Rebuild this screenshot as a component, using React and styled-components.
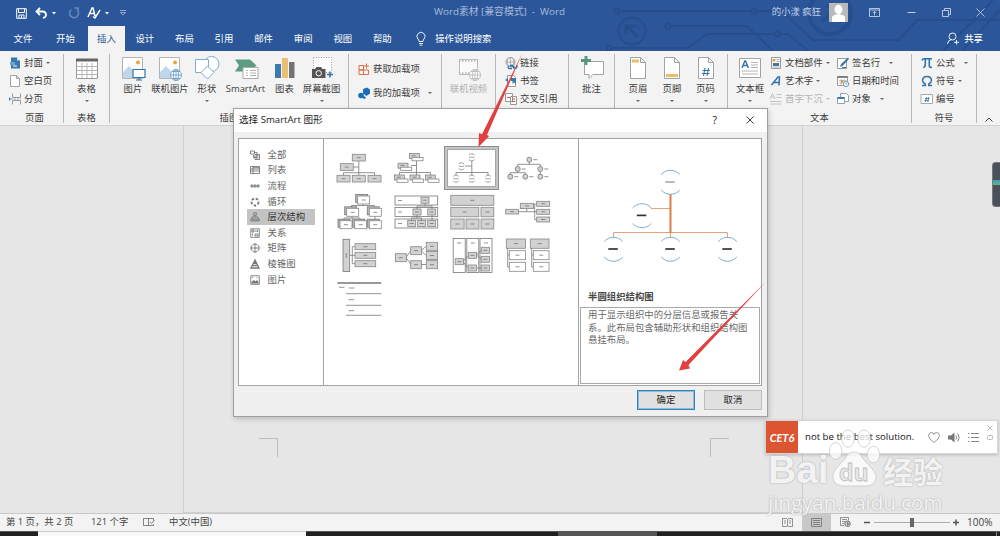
import React from "react";
import styled, { createGlobalStyle } from "styled-components";

const GlobalStyle = createGlobalStyle`
    * { box-sizing: border-box; }
    body {
        margin: 0;
        overflow: hidden;
        font-family: "Open Sans", "Noto Sans CJK SC", sans-serif;
        font-size: 9.4px;
        line-height: 14px;
        color: #3b3b3b;
    }
    p { margin: 0; }
    svg { display: block; flex: none; overflow: visible; }
`;

const Window = styled.div`
    position: relative;
    width: 1000px;
    height: 536px;
    display: grid;
    grid-template-rows: 51px 75px 387px 18px 5px;
    overflow: hidden;
    background: #e6e6e6;
`;

/* ---------- header ---------- */
const Header = styled.header`
    position: relative;
    background: #2b579a;
    color: #fff;
`;
const Circuit = styled.svg`
    position: absolute;
    left: 600px;
    top: 0;
`;
const TitleBar = styled.div`
    position: relative;
    height: 26px;
    display: grid;
    grid-template-columns: 400px 199px 401px;
    align-items: center;
`;
const QuickAccess = styled.div`
    display: flex;
    align-items: center;
    padding-left: 15px;
`;
const Slot = styled.span`
    width: ${(p) => p.$w}px;
    display: flex;
    justify-content: center;
    flex: none;
`;
const WindowTitle = styled.div`
    text-align: center;
    font-size: 9.8px;
    color: #a9bbda;
    white-space: pre;
    padding-bottom: 3px;
`;
const WindowTools = styled.div`
    display: flex;
    align-items: center;
    justify-content: flex-end;
    color: #c3d0e6;
    padding-bottom: 2px;
`;
const Avatar = styled.span`
    width: 19px;
    height: 19px;
    margin: 0 11px 0 8px;
    background: #b9b9b9;
`;
const Tabs = styled.nav`
    position: relative;
    height: 25px;
    display: flex;
    padding-left: 3px;
`;
const Tab = styled.span`
    width: ${(p) => p.$w || 40}px;
    text-align: center;
    line-height: 25px;
    color: ${(p) => (p.$active ? "#2b579a" : "#fff")};
    background: ${(p) => (p.$active ? "#f3f3f3" : "transparent")};
`;
const TellMe = styled.span`
    display: flex;
    align-items: center;
    gap: 9px;
    margin-left: 14px;
`;
const Share = styled.span`
    display: flex;
    align-items: center;
    gap: 5px;
    margin-left: auto;
    padding-right: 17px;
    font-weight: 500;
`;

/* ---------- ribbon ---------- */
const Ribbon = styled.section`
    display: grid;
    grid-template-columns: 64px 46px 239px 93px 54px 73px 46px 113px 184px 65px 23px;
    background: #f3f3f3;
    border-bottom: 1px solid #d2d2d2;
`;
const Group = styled.div`
    display: grid;
    grid-template-rows: 58px 14px;
    padding-top: 1px;
    border-right: 1px solid transparent;
    border-image: linear-gradient(transparent 4px, #b9b9b9 4px, #b9b9b9 71px, transparent 71px) 1;
`;
const GroupBody = styled.div`
    display: flex;
    padding-left: ${(p) => p.$pad || 0}px;
`;
const GroupLabel = styled.div`
    text-align: center;
    line-height: 15px;
`;
const Big = styled.div`
    width: ${(p) => p.$w}px;
    flex: none;
    display: flex;
    flex-direction: column;
    align-items: center;
    padding-top: 4px;
    white-space: nowrap;
    color: ${(p) => (p.$off ? "#b0b0b0" : "#3b3b3b")};
    > span { margin-top: 1px; line-height: 14px; height: 18px; }
`;
const Stack = styled.div`
    display: flex;
    flex-direction: column;
    padding-top: ${(p) => p.$top || 2}px;
    width: ${(p) => p.$w || 60}px;
`;
const Small = styled.div`
    height: ${(p) => p.$h || 18}px;
    display: flex;
    align-items: center;
    gap: 3px;
    white-space: nowrap;
    color: ${(p) => (p.$off ? "#b5b5b5" : "#3b3b3b")};
`;
const CaretMark = styled.i`
    margin-left: ${(p) => p.$gap || 0}px;
    border: 2px solid transparent;
    border-top-color: ${(p) => p.$color || "#666"};
    border-bottom: 0;
    flex: none;
`;
const Collapse = styled.div`
    display: flex;
    align-items: flex-end;
    padding: 0 0 3px 8px;
`;

/* ---------- document ---------- */
const Desk = styled.main`
    padding-left: 183px;
`;
const Page = styled.div`
    width: 620px;
    height: 387px;
    border: 1px solid #cfcfcf;
    border-top: 0;
    display: flex;
    justify-content: space-between;
    align-items: flex-end;
    padding: 0 73px 55px 75px;
`;
const Corner = styled.span`
    width: 19px;
    height: 19px;
    border-top: 1px solid #bdbdbd;
    border-${(p) => p.$side}: 1px solid #bdbdbd;
`;

/* ---------- dialog ---------- */
const Dialog = styled.div`
    position: absolute;
    left: 233px;
    top: 108px;
    width: 535px;
    height: 309px;
    display: flex;
    flex-direction: column;
    background: #f0f0f0;
    border: 1px solid #a0a0a0;
    box-shadow: 1px 2px 5px rgba(0, 0, 0, 0.2);
`;
const DialogTitle = styled.div`
    height: 23px;
    display: flex;
    align-items: center;
    padding: 0 13px 2px 5px;
    background: #fff;
    color: #222;
    font-size: 9.6px;
    > span:nth-child(2) { margin-left: auto; margin-right: 29px; font-size: 10.5px; }
`;
const Panels = styled.div`
    margin: 6px 5px 0 4px;
    height: 248px;
    display: grid;
    grid-template-columns: 85px 255px 1fr;
    background: #fff;
    border: 1px solid #a3a3a3;
`;
const Categories = styled.div`
    border-right: 1px solid #a3a3a3;
    padding: 8px 8px 0 8px;
`;
const Category = styled.div`
    height: 15.6px;
    display: flex;
    align-items: center;
    gap: 8px;
    padding-left: 2.5px;
    color: ${(p) => (p.$active ? "#333" : "#666")};
    background: ${(p) => (p.$active ? "#c3c3c3" : "transparent")};
`;
const Gallery = styled.div`
    display: grid;
    grid-template-columns: repeat(4, 56.4px);
    grid-auto-rows: 44px;
    align-content: start;
    padding: 7px 0 0 7px;
    border-right: 1px solid #a3a3a3;
`;
const Thumb = styled.div`
    display: flex;
    align-items: center;
    justify-content: center;
    ${(p) => p.$active && `
        margin: 0 .8px 0 0;
        border: 3px solid #c4c4c4;
        outline: 1px solid #8e8e8e;
        outline-offset: -1px;
        box-shadow: inset 0 0 0 1px #a5a5a5;
    `}
`;
const Preview = styled.div`
    display: flex;
    flex-direction: column;
    padding: 0 1px 1px 1px;
    > svg { margin-left: -1px; }
`;
const PreviewName = styled.div`
    height: 28px;
    padding: 8.5px 0 0 8px;
    font-weight: 700;
    line-height: 18px;
    color: #484848;
`;
const PreviewText = styled.p`
    flex: 1;
    border: 1px solid #a9a9a9;
    padding: 1px 8px 0 7px;
    line-height: 12.5px;
    color: #6a6a6a;
`;
const Actions = styled.div`
    display: flex;
    justify-content: flex-end;
    gap: 9px;
    padding: 4px 5px 0 0;
`;
const Button = styled.button`
    width: 58px;
    height: 20px;
    padding: 0;
    font: inherit;
    color: #222;
    background: #e1e1e1;
    border: ${(p) => (p.$primary ? "1.500px solid #2c84c4" : "1px solid #bcbcbc")};
    box-shadow: ${(p) => (p.$primary ? "inset 0 0 0 1px #8fbcdd" : "none")};
`;

/* ---------- overlays ---------- */
const Arrows = styled.svg`
    position: absolute;
    left: 0;
    top: 0;
    pointer-events: none;
`;
const SideDock = styled.div`
    position: absolute;
    right: -3px;
    top: 162px;
    width: 11px;
    height: 45px;
    border: 1px solid #777;
    border-radius: 3px;
    background: linear-gradient(#4b515b 17px, #3f9bc0 17px, #59b88f 22px, #4b515b 22px);
`;
const WordCard = styled.div`
    position: absolute;
    left: 765px;
    top: 420px;
    width: 233px;
    height: 34px;
    display: flex;
    align-items: center;
    background: #fff;
    border: 1px solid #d5d5d5;
    box-shadow: 0 1px 3px rgba(0, 0, 0, 0.2);
    color: #111;
`;
const Badge = styled.span`
    width: 32px;
    height: 32px;
    flex: none;
    padding-top: 10px;
    text-align: center;
    font: italic 700 11px/14px Lato, sans-serif;
    color: #fff;
    background: #dc5430;
`;
const Sentence = styled.span`
    width: 125px;
    padding-left: 7px;
    font-size: 9.65px;
    font-weight: 500;
    white-space: nowrap;
`;
const CardTools = styled.span`
    display: flex;
    align-items: center;
    gap: 8px;
    padding-left: 5px;
`;
const CardCorner = styled.span`
    display: flex;
    flex-direction: column;
    gap: 4px;
    margin-left: 7px;
    padding-bottom: 9px;
`;
const Watermark = styled.div`
    position: absolute;
    left: 768px;
    top: 428px;
    width: 182px;
    color: rgba(255, 255, 255, 0.85);
    text-shadow: 0 0 2px #b0b0b0, 0 0 1px #bbb;
`;
const MarkRow = styled.div`
    height: 60px;
    display: flex;
    align-items: flex-end;
    > span { white-space: nowrap; }
    > svg { text-shadow: none; }
`;
const MarkLatin = styled.span`
    width: 62px;
    height: 37px;
    font: 700 39px/37px "Liberation Sans", sans-serif;
`;
const MarkHan = styled.span`
    margin-left: 3px;
    font: 700 30px/36px "Noto Sans CJK SC", sans-serif;
`;
const MarkUrl = styled.div`
    font: 400 20.5px/28px "Open Sans", sans-serif;
    white-space: nowrap;
`;

/* ---------- bottom ---------- */
const StatusBar = styled.footer`
    display: flex;
    align-items: center;
    padding: 0 0 1px 6px;
    background: #f3f3f3;
    border-top: 1px solid #c8c8c8;
    white-space: nowrap;
    color: #444;
`;
const StatusItem = styled.span`
    width: ${(p) => p.$w}px;
`;
const ViewButton = styled.span`
    width: ${(p) => p.$w || 29}px;
    height: 17px;
    display: flex;
    align-items: center;
    justify-content: center;
    background: ${(p) => (p.$active ? "#c8c8c8" : "transparent")};
`;
const Zoom = styled.span`
    display: flex;
    align-items: center;
    width: 139px;
    gap: 7px;
    font-size: 10px;
`;
const Taskbar = styled.div`
    display: grid;
    grid-template-columns: 38px 268px 252px 99px 339px 4px;
    > i { background: #221f22; border-top: 1px solid #555; }
    > i:nth-child(2) { background: #f8f8f8; border-top-color: #ccc; }
    > i:nth-child(4) { background: #575557; }
    > i:nth-child(6) { border-left: 1px solid #888; }
`;

const Caret = ({ gap, color }) => <CaretMark $gap={gap} $color={color} />;

const stroke = { fill: "none", stroke: "currentColor" };

/* 12px icons of the small commands */
const smallIcons = {
    cover: <g><path d="M2 .5h6l3 3v8H2z" fill="#3a78ab" /><path d="M8 .5v3h3" fill="#d8e6f1" /><path d="M1 5h5v3H1z" fill="#6fa3cc" /><path d="M4 9h4" stroke="#fff" /></g>,
    blank: <path d="M1.500.5h6l3 3v8h-9zM7.500.5v3h3" fill="#fff" stroke="#999" strokeWidth=".9" />,
    break: <g fill="none" stroke="#999"><path d="M3.500.5v4h8v-4M3.500 11.500v-4h8v4" /><path d="M2 6h10" stroke="#9ab" strokeDasharray="2 1" /><path d="M0 4l2 2-2 2z" fill="#3a78ab" stroke="none" /></g>,
    store: <g fill="none" stroke="#d9714e"><path d="M1 2.500h4.500v4.500H1zM1 7h4.500v4.500H1zM5.500 7h5v4.500h-5z" /><path d="M8.500.5v5M6 3h5" /></g>,
    addins: <g fill="#1a6fb8"><path d="M5 2l4-1.500 3 2v4L8.500 9 5 6.500z" /><circle cx="3" cy="8.500" r="2.800" /><path d="M5 9l3 1-1 2-3-1z" /></g>,
    link: <g fill="none"><circle cx="5.500" cy="5" r="4.500" stroke="#999" /><path d="M1 5h9M5.500.5v9M3 1.500q-1.500 3.500 0 7M8 1.500q1.500 3.500 0 7" stroke="#999" strokeWidth=".7" /><path d="M5 9.500a2 1.500 0 0 1 3-1M11 8a1.500 1.500 0 0 1-1 3H8M6.500 9.500h3M4 9a1 1 0 0 0 1 2.500h2" stroke="#2f73aa" strokeWidth="1.300" /></g>,
    bookmark: <g><path d="M2.500.5h6l2 2v9h-8z" fill="#fff" stroke="#999" /><path d="M6 3h5v6L9 7.500 7.500 9V6H6z" fill="#3a78ab" /><path d="M0 5l3-2v4z" fill="#3a78ab" /></g>,
    cross: <g fill="#fff" stroke="#999"><path d="M.5.5h7v8h-7zM5.500 3.500h6v8h-6z" /><path d="M2 4.500h3M7 6h3M7 8.500h3" stroke="#d2503a" /></g>,
    parts: <g><path d="M1.500.5h9v11h-9z" fill="#fff" stroke="#999" /><path d="M2.500 2h3v2.500h-3z" fill="#e2a33d" /><path d="M6.500 2.500h3M6.500 4.500h3M2.500 10h7" stroke="#999" strokeWidth=".8" /><path d="M3 6h6v3H3z" fill="#3a78ab" /></g>,
    art: <path d="M1.500 10L8 2h1.500L9 10.500M4 7.500h5.500" fill="none" stroke="#2f73aa" strokeWidth="1.500" />,
    drop: <g fill="none" stroke="#c4c4c4"><path d="M0 6L2.500.5 5 6M1 4h3M6.500 1.500h5M6.500 4.500h5M0 8.500h11.500M0 11h11.500" /></g>,
    sign: <g><path d="M.5 1.500h9v10h-9z" fill="#fff" stroke="#999" /><path d="M3 10l1-3 7-6.500L12 2 5.500 9z" fill="#3a78ab" /><path d="M5 10.500h4" stroke="#3a78ab" /></g>,
    date: <g><path d="M.5 1.500h10v9H.5z" fill="#fff" stroke="#999" /><path d="M.5 2h10" stroke="#777" strokeWidth="1.800" /><path d="M2 5.500h7M2 8h4M4 4v6M7 4v3" stroke="#aaa" strokeWidth=".7" /><path d="M4 5h2v3H4z" fill="#e0a040" /><circle cx="9" cy="9" r="2.700" fill="#fff" stroke="#6c9cc2" /><path d="M9 7.500V9h1.300" fill="none" stroke="#4d86b5" strokeWidth=".8" /></g>,
    object: <g fill="#fff" stroke="#8da2b5"><path d="M3.500.5h6l2 2v6h-8z" /><path d="M.5 4.500h7v6h-7z" /><path d="M.5 5h7" stroke="#2f73aa" strokeWidth="1.800" /></g>,
    pi: <path d="M1 3.500Q1.500 1.800 3 1.800h8M4.300 2v5q0 3-2 3.500M8.300 2v7q0 2 2.500 1" fill="none" stroke="#2f73aa" strokeWidth="1.600" />,
    omega: <path d="M1 10.500h3.300V9Q1.500 7.500 1.500 5.200 2 1.500 6 1.500t4.500 3.700Q10.500 7.500 7.700 9v1.500H11" fill="none" stroke="#2f73aa" strokeWidth="1.500" />,
    number: <g><path d="M0 1.500h11.500v9H0z" fill="#fff" stroke="#aaa" /><path d="M5.500 4l-1 5M7.800 4l-1 5M4 5.500h4.500M3.500 7.500H8" fill="none" stroke="#2f73aa" strokeWidth=".8" /></g>,
};

const SmallItem = ({ icon, label, off, caret, h }) => (
    <Small $off={off} $h={h}>
        <svg width="12" height="12" viewBox="0 0 12 12">{smallIcons[icon]}</svg>
        <span>{label}</span>
        {caret !== undefined && <Caret gap={caret} color={off ? "#bbb" : undefined} />}
    </Small>
);

const photo = (
    <g>
        <path d="M1.500 1.500h20v21h-20z" fill="#fff" stroke="#b4b4b4" />
        <path d="M2 22v-6l6-6 7 7 3-3 4 3v5z" fill="#c0d6ea" />
        <circle cx="17" cy="6.500" r="2" fill="#eba53f" />
    </g>
);
const sheet = <path d="M4.500 1.500h10l5 5v16h-15zM14.500 1.500v5h5" fill="#fff" stroke="#a2a2a2" />;
const globe = (color) => (
    <g fill="#fff" stroke={color} strokeWidth=".9">
        <circle cx="18" cy="19" r="5.500" />
        <path d="M12.500 19h11M18 13.500v11M14 15.500h8M14 22.500h8" fill="none" />
        <ellipse cx="18" cy="19" rx="2.700" ry="5.500" fill="none" />
    </g>
);

/* 24px icons of the large commands */
const bigIcons = {
    table: <g><path d="M1.500 3.500h21v19h-21z" fill="#fff" stroke="#999" /><path d="M1 4h22" stroke="#666" strokeWidth="3" /><path d="M2 10.500h20M2 14.500h20M2 18.500h20M7 7v15M12 7v15M17 7v15" stroke="#b5b5b5" /></g>,
    picture: <g>{photo}<path d="M12 13.500h12v8H12zM18 21.500v2.500M15 24h6" fill="#fff" stroke="#2f73aa" strokeWidth="1.200" /></g>,
    online: <g>{photo}{globe("#6f9dc6")}</g>,
    shapes: <g fill="#fff" stroke="#7fabcf"><circle cx="16.500" cy="8" r="7.500" /><path d="M.5 3.500h13v13H.5z" /><path d="M12.500 10l6.500 6.500-6.500 6.500L6 16.500z" /></g>,
    smart: <g><path d="M1 3.500h15l6.500 6-6.500 6H1l4-6z" fill="#5b9c83" /><path d="M9 11.500h15v11H9z" fill="#fff" stroke="#aaa" /><path d="M12 14.500h2M16 14.500h6M12 17h2M16 17h6M12 19.500h2M16 19.500h6" stroke="#b5b5b5" /></g>,
    chart: <g><path d="M2 8h6v14H2z" fill="#3e79ab" /><path d="M9 2h6v20H9z" fill="#e9bf74" /><path d="M16 6h5.500v16H16z" fill="#737373" /></g>,
    shot: <g><path d="M3.500 1.500h18v15h-18z" fill="#fff" stroke="#999" strokeDasharray="1 1.500" /><path d="M2 13h3l1.500-2H11l1.500 2h3v9H2z" fill="#555" /><circle cx="8.700" cy="17.300" r="2.700" fill="#555" stroke="#fff" /><path d="M20 15.500v6M17 18.500h6" stroke="#2f73aa" strokeWidth="1.500" /></g>,
    video: <g><path d="M2.500 3.500h18v15h-18z" fill="#fafafa" stroke="#bbb" /><path d="M2 4.500h19M2 17.500h19" stroke="#b9b9b9" strokeWidth="2.500" strokeDasharray="1.500 1.500" />{globe("#bbb")}</g>,
    comment: <g><path d="M4.500 5.500h19v13H13l-4 4v-4H4.500z" fill="#fff" stroke="#a2a2a2" /><path d="M6 0v9M1 4.500h10" stroke="#56987c" strokeWidth="3" /></g>,
    head: <g>{sheet}<path d="M6 5h7" stroke="#e8bd67" strokeWidth="3" /></g>,
    foot: <g>{sheet}<path d="M6 19.500h12" stroke="#e8bd67" strokeWidth="3" /></g>,
    page: <g>{sheet}<path d="M11 12l-1.500 8M14.500 12L13 20M8.500 14.500H16M8 17.500h7.500" fill="none" stroke="#2f73aa" strokeWidth="1.100" /></g>,
    text: <g><path d="M1.500 2.500h21v19h-21z" fill="#fff" stroke="#a2a2a2" /><path d="M4 12l2.800-7h.8l2.800 7M5 9.500h4.500" fill="none" stroke="#2f73aa" strokeWidth="1.400" /><path d="M13 6.500h7M13 9h7M13 11.500h7M4 15h16M4 18h16" stroke="#b5b5b5" /></g>,
};

const BigItem = ({ icon, label, w, off, caret }) => (
    <Big $w={w} $off={off}>
        <svg width="24" height="25" viewBox="0 0 24 25">{bigIcons[icon]}</svg>
        <span>{label}</span>
        {caret && <Caret />}
    </Big>
);

/* ---------- SmartArt thumbnails, drawn on a 46x36 board ---------- */
const Node = ({ x, y, w = 13, h = 6.700, white }) => (
    <g>
        <rect x={x} y={y} width={w} height={h} fill={white ? "#fff" : "#d2d2d2"} stroke="#868686" strokeWidth=".8" />
        <path d={`M${x + w / 2 - 2} ${y + h / 2}h4`} stroke="#666" strokeWidth=".7" />
    </g>
);
const Wire = ({ d }) => <path d={d} fill="none" stroke="#777" strokeWidth=".8" />;
const Pair = ({ x, y }) => (
    <g>
        <rect x={x} y={y} width="10" height="5" fill="#d2d2d2" stroke="#777" strokeWidth=".7" />
        <path d={`M${x + 2.500} ${y + 2.200}h4`} stroke="#666" strokeWidth=".7" />
        <rect x={x + 2.700} y={y + 4} width="11" height="3.300" fill="#fff" stroke="#777" strokeWidth=".7" />
    </g>
);
const Stacked = ({ x, y }) => (
    <g>
        <rect x={x - 2} y={y - 1.500} width="12" height="8" fill="#bbb" stroke="#777" strokeWidth=".8" />
        <Node x={x} y={y} w={12} h={8} white />
    </g>
);
const Arc = ({ x, y }) => (
    <g fill="none" stroke="#777" strokeWidth=".7">
        <path d={`M${x - 2.800} ${y - 2.200}a3.600 3.600 0 0 1 5.600 0M${x - 2.800} ${y + 2.200}a3.600 3.600 0 0 0 5.600 0M${x - 2.500} ${y}h5`} />
    </g>
);
const Dot = ({ x, y }) => (
    <g stroke="#777" strokeWidth=".8"><circle cx={x} cy={y} r="2.500" fill="#d2d2d2" /><path d={`M${x + 4} ${y}h4`} /></g>
);

const thumbs = [
    <g><Wire d="M22.800 11v14M17 17h5.800M7.500 25.500V22.700h31v2.800" /><Node x={16.300} y={4.300} /><Node x={4.300} y={13.700} /><Node x={1} y={25.300} /><Node x={16.300} y={25.300} /><Node x={32} y={25.300} /></g>,
    <g><Wire d="M23.500 11v14M18 15.500h5.500M6.500 25v-2.500h31V25" /><Pair x={16.300} y={3.500} /><Pair x={5} y={13.200} /><Pair x={1.300} y={25} /><Pair x={17} y={25} /><Pair x={32.300} y={25} /></g>,
    <g><Wire d="M22.800 11v14M16 16h6.800M7 25v-2.500h32V25" /><Arc x={22.800} y={7.300} /><Arc x={12.500} y={16.300} /><Arc x={7} y={28.700} /><Arc x={22.800} y={28.700} /><Arc x={39} y={28.700} /></g>,
    <g><Wire d="M24.300 12v2.300M12.700 17v-2.700h22.600V25M12.700 21v1.700M5.300 25v-2.300h15V25" /><Dot x={24.300} y={9.700} /><Dot x={12.700} y={19} /><Dot x={35.300} y={19} /><Dot x={5.300} y={26.700} /><Dot x={20.300} y={26.700} /><Dot x={35.300} y={26.700} /></g>,
    <g><Wire d="M27 10v1.500M15.500 14v-2.500h23V14M16 22v3M8 26v-2h16v2M39 22v5" /><Stacked x={21.700} y={2} /><Stacked x={10.700} y={14.300} /><Stacked x={33.300} y={14.300} /><Stacked x={4} y={26.700} /><Stacked x={18.700} y={26.700} /><Stacked x={33.300} y={26.700} /></g>,
    <g>
        {[2, 13.500, 25].map((y) => <g key={y}><rect x="2" y={y} width="42.700" height="9" fill="#fff" stroke="#777" strokeWidth=".8" /><Wire d={`M5 ${y + 4.500}h4`} /></g>)}
        <Wire d="M32 9v3M24 15v-3h15v15M24 20v4M18.500 27v-3h10v3" />
        <Node x={28} y={3.200} w={8} h={6} /><Node x={20} y={15} w={8} h={6} /><Node x={34.700} y={15} w={8} h={6} />
        <Node x={14.700} y={26.500} w={8} h={6} /><Node x={24.700} y={26.500} w={8} h={6} /><Node x={34.700} y={26.500} w={8} h={6} />
    </g>,
    <g><Node x={1.800} y={1.300} w={43} h={10} /><Node x={1.800} y={13.300} w={28} h={9.500} /><Node x={32} y={13.300} w={12.800} h={9.500} /><Node x={1.800} y={25} w={13.300} h={10} /><Node x={17} y={25} w={13} h={10} /><Node x={32} y={25} w={12.800} h={10} /></g>,
    <g><Wire d="M13 17.700h19M21.700 14v3.700M32 10h-2.300v15.500H32" /><Node x={.7} y={15.300} w={12.700} h={4.700} /><Node x={15.300} y={9.300} w={13.300} h={5.300} /><Node x={31.700} y={7.300} h={5} /><Node x={31.700} y={15.300} h={5} /><Node x={31.700} y={23} h={5} /></g>,
    <g><Wire d="M13.700 17.300H19M19 8.700h-2.700v17H19" /><rect x="7" y="1.300" width="6.700" height="32.300" fill="#d2d2d2" stroke="#777" strokeWidth=".8" /><Wire d="M10.300 15v5" /><Node x={19} y={5.700} w={20.700} h={6} /><Node x={19} y={14.300} w={20.700} h={6} /><Node x={19} y={22.700} w={20.700} h={6} /></g>,
    <g><Wire d="M13 19.500l5-7M13 19.500l5 7M28 12.500l5-4M28 12.500l5 5M28 26.500h5" /><Node x={2.300} y={15.700} w={11} h={8} /><Node x={17.700} y={8.700} w={10.700} h={8} /><Node x={17.700} y={22.700} w={10.700} h={8} /><Node x={33.300} y={4.300} w={11.300} h={8} /><Node x={33.300} y={13.500} w={11.300} h={8} /><Node x={33.300} y={22.700} w={11.300} h={8} /></g>,
    <g>
        {[4.200, 17.800, 31].map((x) => <g key={x}><rect x={x} y=".5" width="12" height="34" fill="#fff" stroke="#777" strokeWidth=".8" /><Wire d={`M${x + 4} 5h4`} /></g>)}
        <Wire d="M14 23.700l5-6M14 23.700l5 6M27.500 17l5-5M27.500 17l5 4M27.500 30h5" />
        <Node x={6.200} y={20.700} w={8.300} h={6} /><Node x={19.200} y={14.300} w={8.300} h={6} /><Node x={19.200} y={27} w={8.300} h={6} />
        <Node x={32.200} y={9.300} w={8.300} h={6} /><Node x={32.200} y={18.300} w={8.300} h={6} /><Node x={32.200} y={27} w={8.300} h={6} />
    </g>,
    <g><Wire d="M2.700 10v19h2M2.700 17h2M26.700 10v19h2M26.700 17h2" /><Node x={1.300} y={1} w={19.300} h={9.300} /><Node x={25.300} y={1} w={18.700} h={9.300} /><Node x={4.300} y={12.700} w={16.300} h={9} white /><Node x={28.300} y={12.700} w={15.700} h={9} white /><Node x={4.300} y={24.300} w={16.300} h={9} white /><Node x={28.300} y={24.300} w={15.700} h={9} white /></g>,
    <g><path d="M1.300 1h44" stroke="#777" strokeWidth="1.500" /><Wire d="M3 5.300h5.500M12.700 6h5.500M10 11.700h35.300M12.700 17.700h5.500M10 23.300h35.300M12.700 28.700h5.500M10 33.300h35.300" /></g>,
];

const categories = [
    ["全部", <path d="M.5 1h4v3h-4zM4.500 2.500H7v5H3.500V5M5 4.500h4.500v5H5zM6 6h2.500M6 8h2.500" />],
    ["列表", <path d="M.5 1.500h9v7h-9zM.5 4h9M.5 6h9M3 1.500v7M3 2.700h6" />],
    ["流程", <path d="M.5 5L2 3.500 3.500 5 2 6.500zM3.500 5L5 3.500 6.500 5 5 6.500zM6.500 5L8 3.500 9.500 5 8 6.500z" fill="#999" />],
    ["循环", <circle cx="5" cy="5" r="3.500" strokeWidth="1.800" strokeDasharray="2.500 1.700" />],
    ["层次结构", <path d="M3.800.8h2.500v2.500H3.800zM5 3.300V5M2 7V5h6v2M.8 7h2.500v2H.8zM3.900 7h2.300v2H3.900zM6.800 7h2.500v2H6.800z" />],
    ["关系", <path d="M.8.8h8.500v8.500H.8zM2 2h2v2h-2zM6 2v2M7.500 2v2M2.500 5.500v2M5 6h3v2h-3z" />],
    ["矩阵", <path d="M5 1a4 4 0 1 0 .1 0zM5 0v10M0 5h10" />],
    ["棱锥图", <path d="M5 1L1 9h8zM3.500 4.500h3M2.500 6.700h5M5 2v2" strokeWidth="1.300" />],
    ["图片", <g><path d="M.8.8h8.500v8.500H.8z" /><path d="M1.500 8.500V7L4 5l1.500 1.500L7 5l1.500 2v1.500z" fill="#777" stroke="none" /><path d="M6.500 3h1M2 2.500h1" /></g>],
];

const PreviewArc = ({ x, y, light }) => (
    <g fill="none">
        <path d={`M${x - 9.300} ${y - 7.700}a12.200 12.200 0 0 1 18.600 0M${x - 9.300} ${y + 7.700}a12.200 12.200 0 0 0 18.600 0`} stroke="#83aecb" />
        <path d={`M${x - 5.200} ${y - .3}h9.500`} stroke={light ? "#777" : "#333"} strokeWidth={light ? 1 : 1.700} />
    </g>
);

const HeaderArea = () => (
    <Header>
        <Circuit width="400" height="51" viewBox="0 0 400 51" fill="none" stroke="#264e8d" strokeWidth="2" style={{ overflow: "hidden" }}>
            <path d="M19 11h132M157 11h25l31 29h86l18-20h83M71 26h76l26 25M12 48h76l19-14h67M180 34h8l20 17M393 0l-50 51M375 20l-14 12M400 10l-38 41" />
            <circle cx="16.500" cy="11" r="2.500" /><circle cx="68" cy="26" r="2.500" /><circle cx="9" cy="48" r="2.500" />
            <circle cx="154" cy="11" r="2.500" /><circle cx="177" cy="34" r="2.500" />
            <circle cx="32" cy="31" r="13.500" /><path d="M38 37L27 26M26 35v-9h10" strokeWidth="3" />
            <circle cx="230" cy="13" r="21" strokeWidth="4" /><path d="M222 22l16-16M226 6h12v11" strokeWidth="3" />
        </Circuit>
        <TitleBar>
            <QuickAccess>
                <Slot $w={13}><svg width="11" height="11" viewBox="0 0 11 11"><path d="M.7.7h9.600v9.600H.7zM2.500 1v3.500h6V1M3 10V7h5v3M5.500 7.500V10" {...stroke} /></svg></Slot>
                <Slot $w={34}><svg width="12" height="12" viewBox="0 0 12 12"><path d="M5 1L1.500 4.500 5 8M2 4.500h5.500q3.500.2 3.500 3.500-.3 2.500-3 3" {...stroke} strokeWidth="1.800" /></svg><svg width="5" height="12" viewBox="0 0 5 12" style={{ marginLeft: 4 }}><path d="M1 5h4L3 7.500z" fill="#fff" /></svg></Slot>
                <Slot $w={24}><svg width="12" height="12" viewBox="0 0 12 12" opacity=".3"><path d="M3.500 2.500A4.500 4.500 0 1 0 9 2.800M6.500 1h3.500v3.500" {...stroke} strokeWidth="1.500" /></svg></Slot>
                <Slot $w={24}><svg width="14" height="12" viewBox="0 0 14 12"><path d="M1 10L5 1h1l2 8M2.500 6.500H7M6 9.500l2 1.500 5-8" {...stroke} strokeWidth="1.500" /></svg><svg width="5" height="12" viewBox="0 0 5 12" style={{ marginLeft: 3 }}><path d="M1 5h4L3 7.500z" fill="#fff" /></svg></Slot>
                <Slot $w={26}><svg width="6" height="6" viewBox="0 0 6 6" opacity=".6"><path d="M0 .5h6M.5 2.500h5L3 5z" {...stroke} strokeWidth=".8" /></svg></Slot>
            </QuickAccess>
            <WindowTitle>Word素材 [兼容模式]  -  Word</WindowTitle>
            <WindowTools>
                <span>的小漾 疯狂</span>
                <Avatar><svg width="19" height="19" viewBox="0 0 19 19" fill="#fff"><ellipse cx="9.500" cy="6.500" rx="4" ry="4.700" /><path d="M3 19v-5q1-2 6.500-3 5.500 1 6.500 3v5z" /></svg></Avatar>
                <Slot $w={31}><svg width="11" height="9" viewBox="0 0 11 9"><path d="M.5.5h10v8H.5zM.5 2h10M5.500 7.500v-4M3.800 5l1.700-1.700L7.200 5" {...stroke} strokeWidth=".9" /></svg></Slot>
                <Slot $w={42}><svg width="9" height="9" viewBox="0 0 9 9"><path d="M.5 4.500h8" {...stroke} /></svg></Slot>
                <Slot $w={28}><svg width="9" height="9" viewBox="0 0 9 9"><path d="M.5 2.500h6v6h-6zM2.500 2.500v-2h6v6h-2" {...stroke} strokeWidth=".9" /></svg></Slot>
                <Slot $w={40}><svg width="9" height="9" viewBox="0 0 9 9"><path d="M.5.5l8 8M8.500.5l-8 8" {...stroke} strokeWidth=".9" /></svg></Slot>
            </WindowTools>
        </TitleBar>
        <Tabs>
            <Tab>文件</Tab>
            <Tab $w={45}>开始</Tab>
            <Tab $w={37} $active>插入</Tab>
            {["设计", "布局", "引用", "邮件", "审阅", "视图", "帮助"].map((t) => <Tab key={t} $w={39.600}>{t}</Tab>)}
            <TellMe>
                <svg width="10" height="14" viewBox="0 0 10 14"><path d="M3 9.500Q3 8 2 7a4 4 0 1 1 6 0Q7 8 7 9.500zM3 11.500h4M3.700 13.200h2.600" {...stroke} strokeWidth=".9" /></svg>
                操作说明搜索
            </TellMe>
            <Share>
                <svg width="12" height="13" viewBox="0 0 12 13"><circle cx="5.500" cy="4.500" r="3.500" {...stroke} strokeWidth=".9" /><path d="M.5 12q.5-4 4-4.500M9.500 8v4.500M7 10.300h5" {...stroke} strokeWidth=".9" /></svg>
                共享
            </Share>
        </Tabs>
    </Header>
);

const RibbonArea = () => (
    <Ribbon>
        <Group>
            <GroupBody $pad={9}>
                <Stack>
                    <SmallItem icon="cover" label="封面" caret={0} />
                    <SmallItem icon="blank" label="空白页" />
                    <SmallItem icon="break" label="分页" />
                </Stack>
            </GroupBody>
            <GroupLabel>页面</GroupLabel>
        </Group>
        <Group>
            <GroupBody><BigItem icon="table" label="表格" w={45} caret /></GroupBody>
            <GroupLabel>表格</GroupLabel>
        </Group>
        <Group>
            <GroupBody $pad={5}>
                <BigItem icon="picture" label="图片" w={36} />
                <BigItem icon="online" label="联机图片" w={38} />
                <BigItem icon="shapes" label="形状" w={36} caret />
                <BigItem icon="smart" label="SmartArt" w={41} />
                <BigItem icon="chart" label="图表" w={37} />
                <BigItem icon="shot" label="屏幕截图" w={37} caret />
            </GroupBody>
            <GroupLabel>插图</GroupLabel>
        </Group>
        <Group>
            <GroupBody $pad={9}>
                <Stack $top={5} $w={80}>
                    <SmallItem icon="store" label="获取加载项" h={24} />
                    <SmallItem icon="addins" label="我的加载项" h={24} caret={5} />
                </Stack>
            </GroupBody>
        </Group>
        <Group><GroupBody><BigItem icon="video" label="联机视频" w={53} off /></GroupBody></Group>
        <Group>
            <GroupBody $pad={9}>
                <Stack>
                    <SmallItem icon="link" label="链接" />
                    <SmallItem icon="bookmark" label="书签" />
                    <SmallItem icon="cross" label="交叉引用" />
                </Stack>
            </GroupBody>
        </Group>
        <Group><GroupBody><BigItem icon="comment" label="批注" w={45} /></GroupBody></Group>
        <Group>
            <GroupBody $pad={6}>
                <BigItem icon="head" label="页眉" w={34} caret />
                <BigItem icon="foot" label="页脚" w={34} caret />
                <BigItem icon="page" label="页码" w={33} caret />
            </GroupBody>
        </Group>
        <Group>
            <GroupBody $pad={2}>
                <BigItem icon="text" label="文本框" w={40} caret />
                <Stack $w={67}>
                    <SmallItem icon="parts" label="文档部件" caret={0} />
                    <SmallItem icon="art" label="艺术字" caret={0} />
                    <SmallItem icon="drop" label="首字下沉" off caret={0} />
                </Stack>
                <Stack $w={70}>
                    <SmallItem icon="sign" label="签名行" caret={6} />
                    <SmallItem icon="date" label="日期和时间" />
                    <SmallItem icon="object" label="对象" caret={6} />
                </Stack>
            </GroupBody>
            <GroupLabel>文本</GroupLabel>
        </Group>
        <Group>
            <GroupBody $pad={9}>
                <Stack $w={50}>
                    <SmallItem icon="pi" label="公式" caret={6} />
                    <SmallItem icon="omega" label="符号" caret={0} />
                    <SmallItem icon="number" label="编号" />
                </Stack>
            </GroupBody>
            <GroupLabel>符号</GroupLabel>
        </Group>
        <Collapse><svg width="8" height="5" viewBox="0 0 8 5"><path d="M.5 4.500L4 1l3.500 3.500" {...stroke} /></svg></Collapse>
    </Ribbon>
);

const SmartArtDialog = () => (
    <Dialog>
        <DialogTitle>
            <span>选择 SmartArt 图形</span>
            <span>?</span>
            <svg width="8" height="8" viewBox="0 0 9 9"><path d="M.5.5l8 8M8.500.5l-8 8" {...stroke} /></svg>
        </DialogTitle>
        <Panels>
            <Categories>
                {categories.map(([name, icon]) => (
                    <Category key={name} $active={name === "层次结构"}>
                        <svg width="10" height="10" viewBox="0 0 10 10" fill="none" stroke="#777" strokeWidth=".9">{icon}</svg>
                        {name}
                    </Category>
                ))}
            </Categories>
            <Gallery>
                {thumbs.map((art, i) => (
                    <Thumb key={i} $active={i === 2}>
                        <svg width="46" height="36" viewBox="0 0 46 36">{art}</svg>
                    </Thumb>
                ))}
            </Gallery>
            <Preview>
                <svg width="180" height="140" viewBox="0 0 180 140">
                    <g fill="none" stroke="#e0a57c">
                        <path d="M72 69.500h19M34.500 99v-5.500h114V99M91.500 93v6" />
                        <path d="M91.500 55v39" stroke="#dc7c42" strokeWidth="2" />
                    </g>
                    <PreviewArc x={91.500} y={43.300} light />
                    <PreviewArc x={63} y={76.700} />
                    <PreviewArc x={34.500} y={110.300} />
                    <PreviewArc x={91.500} y={110.300} />
                    <PreviewArc x={148.500} y={110.300} />
                </svg>
                <PreviewName>半圆组织结构图</PreviewName>
                <PreviewText>用于显示组织中的分层信息或报告关系。此布局包含辅助形状和组织结构图悬挂布局。</PreviewText>
            </Preview>
        </Panels>
        <Actions>
            <Button $primary>确定</Button>
            <Button>取消</Button>
        </Actions>
    </Dialog>
);

export default function App() {
    return (
        <Window>
            <GlobalStyle />
            <HeaderArea />
            <RibbonArea />
            <Desk>
                <Page>
                    <Corner $side="right" />
                    <Corner $side="left" />
                </Page>
            </Desk>
            <StatusBar>
                <StatusItem $w={85}>第 1 页，共 2 页</StatusItem>
                <StatusItem $w={52}>121 个字</StatusItem>
                <StatusItem $w={26}><svg width="12" height="10" viewBox="0 0 12 10"><path d="M5.500 1.500v7h-5v-7zM5.500 1.500h5v2M5.500 8.500h5V7M7 5l1.500 1.500L11.500 3" {...stroke} strokeWidth=".8" opacity=".8" /></svg></StatusItem>
                <StatusItem $w={603}>中文(中国)</StatusItem>
                <ViewButton $w={30}><svg width="11" height="9" viewBox="0 0 11 9"><path d="M.5.5h4l1 1 1-1h4v8h-4l-1-.5-1 .5h-4zM5.500 1.500V8M2 3h2M2 5h2M7 3h2M7 5h2" {...stroke} strokeWidth=".8" opacity=".7" /></svg></ViewButton>
                <ViewButton $active><svg width="11" height="9" viewBox="0 0 11 9"><path d="M.5.5h10v8H.5zM2 2.500h7M2 4.500h7M2 6.500h7" {...stroke} strokeWidth=".8" opacity=".7" /></svg></ViewButton>
                <ViewButton><svg width="11" height="10" viewBox="0 0 11 10"><path d="M4 8.500H.5v-8h8v3M2 2.500h5M2 4.500h3M2 6.500h2" {...stroke} strokeWidth=".8" opacity=".7" /><circle cx="7.500" cy="6.700" r="2.700" fill="#ddd" stroke="#666" /><path d="M7 5l2 1.500L7.500 9z" fill="#555" /></svg></ViewButton>
                <Zoom>
                    <svg width="100" height="9" viewBox="0 0 100 9"><path d="M4 4.500h6M93 4.500h6M96 1.500v6" stroke="#555" strokeWidth="1.500" /><path d="M14 4.500h76" stroke="#aaa" /><path d="M50 0h4v9h-4z" fill="#666" /></svg>
                    100%
                </Zoom>
            </StatusBar>
            <Taskbar><i /><i /><i /><i /><i /><i /></Taskbar>

            <SmartArtDialog />
            <SideDock />
            <WordCard>
                <Badge>CET6</Badge>
                <Sentence>not be the best solution.</Sentence>
                <CardTools>
                    <svg width="12" height="11" viewBox="0 0 12 11"><path d="M6 10.500Q.5 6.500.5 3.500.8.5 3.500.5 5.500.7 6 2.300 6.500.7 8.500.5q2.700 0 3 3 0 3-5.500 7z" fill="none" stroke="#888" strokeWidth=".9" /></svg>
                    <svg width="12" height="11" viewBox="0 0 12 11"><path d="M0 3.500h3L6.500.5v10L3 7.500H0z" fill="#777" /><path d="M8 3.500q1.500 2 0 4M9.700 1.500q3 4 0 8" fill="none" stroke="#888" /></svg>
                    <svg width="12" height="11" viewBox="0 0 12 11"><path d="M0 1.500h1.500M3 1.500h8M0 5.500h1.500M3 5.500h8M0 9.500h1.500M3 9.500h8" stroke="#888" /></svg>
                </CardTools>
                <CardCorner>
                    <svg width="6" height="6" viewBox="0 0 6 6"><path d="M.5.5l5 5M5.500.5l-5 5" stroke="#aaa" strokeWidth=".8" /></svg>
                    <svg width="6" height="5" viewBox="0 0 6 5"><rect x=".5" y=".5" width="5" height="4" rx="1" fill="none" stroke="#aaa" strokeWidth=".8" /></svg>
                </CardCorner>
            </WordCard>
            <Watermark>
                <MarkRow>
                    <MarkLatin>Bai</MarkLatin>
                    <svg width="50" height="60" viewBox="0 0 50 60" fill="#fff" fillOpacity=".75" stroke="#c9c9c9" strokeWidth=".8">
                        <ellipse cx="5.700" cy="23" rx="6.200" ry="8.300" /><ellipse cx="18" cy="10.500" rx="6.200" ry="8.700" />
                        <ellipse cx="34" cy="10.500" rx="6.200" ry="8.700" /><ellipse cx="43.500" cy="26.500" rx="6.200" ry="8.300" />
                        <path d="M24 24q6 0 9 7 11 11 13 16 1 10-9 11H13Q2 57 3 47q1-6 12-16 3-7 9-7z" />
                        <text x="9" y="52.500" fontSize="23" fontWeight="700" fill="#e9e9e9" fillOpacity="1" stroke="#bdbdbd">du</text>
                    </svg>
                    <MarkHan>经验</MarkHan>
                </MarkRow>
                <MarkUrl>jingyan.baidu.com</MarkUrl>
            </Watermark>
            <Arrows width="1000" height="536" viewBox="0 0 1000 536" fill="#e04040">
                <path d="M522.500 53L487 135l2 1.200L478.500 147l.5-14 3 1.200z" />
                <path d="M766.500 281l-78 84 1.500 3.500-11 2 4-10.500 2.500 2z" />
            </Arrows>
        </Window>
    );
}
